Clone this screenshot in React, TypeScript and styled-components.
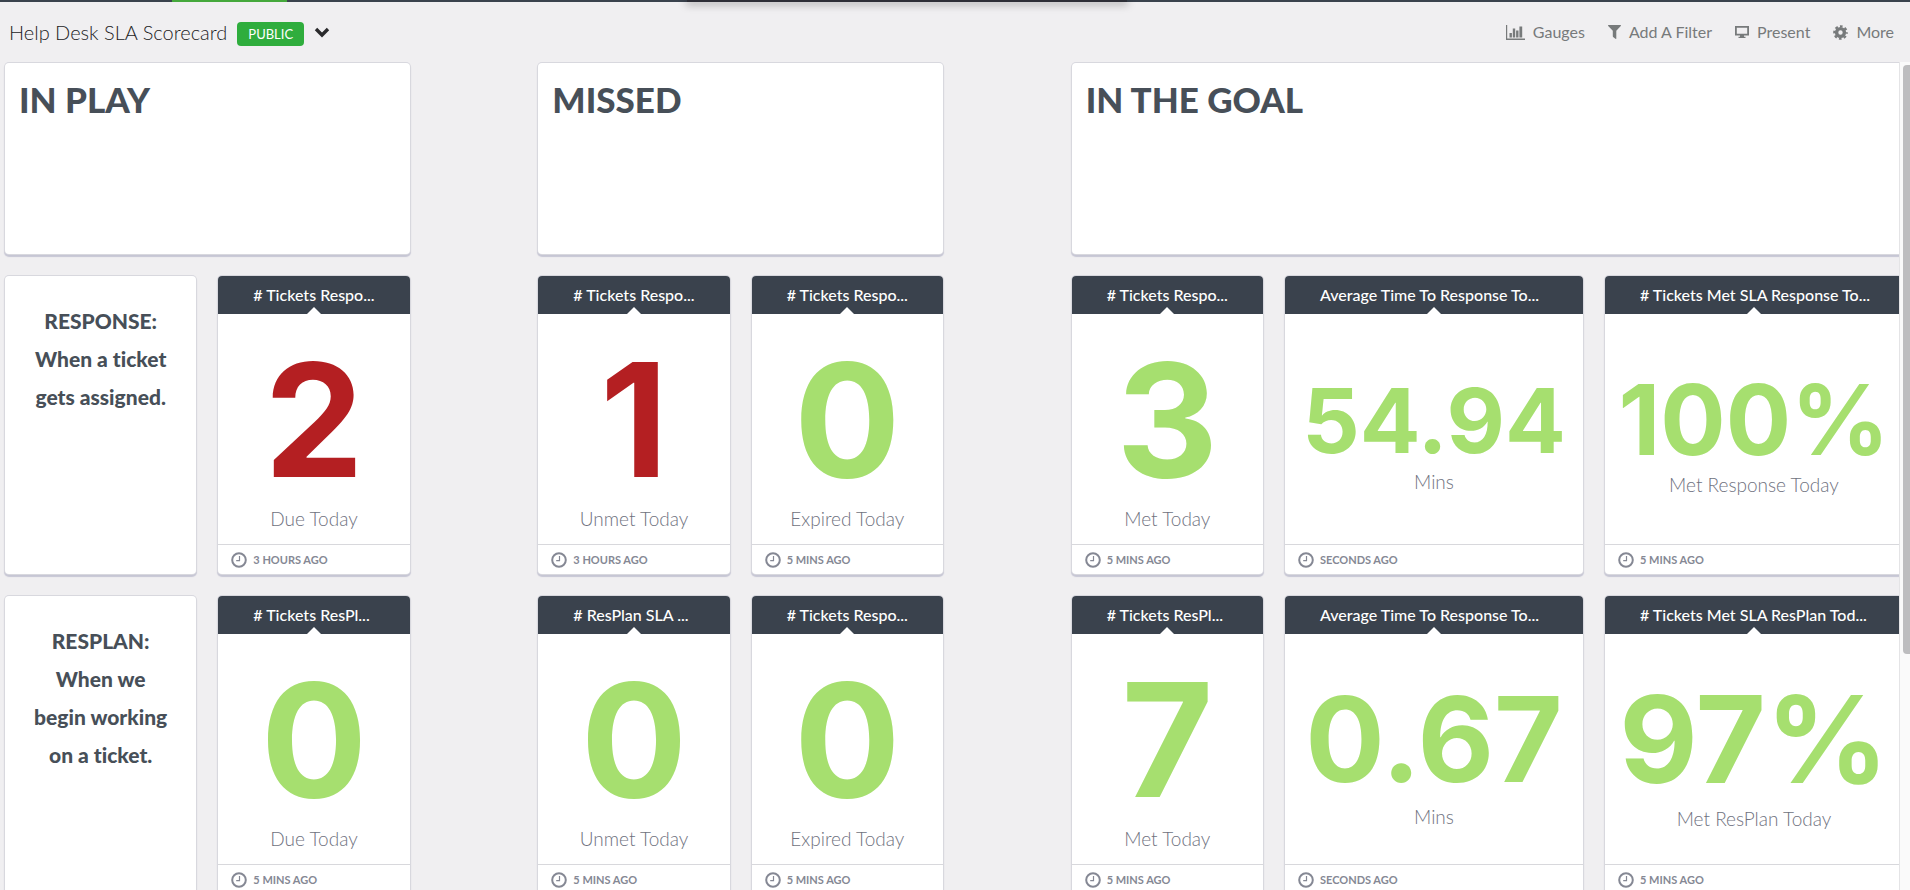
import React from "react";
import styled, { createGlobalStyle } from "styled-components";

const GlobalStyle = createGlobalStyle`
  *, *::before, *::after { box-sizing: border-box; }
  html, body, #root { height: 100%; }
  body {
    margin: 0;
    overflow: hidden;
    background: #f0eff1;
    color: #474f58;
    font-family: Lato, "Liberation Sans", sans-serif;
    font-variant-ligatures: none;
  }
`;

const Page = styled.div`
  display: flex;
  flex-direction: column;
  height: 100%;
`;

const NavEdge = styled.nav`
  display: flex;
  flex: none;
  height: 2px;
  padding-left: 9%;
  background: #3a424d;
`;

const NavTab = styled.span`
  width: 115px;
  background: #45a83c;
`;

const NavPanel = styled.span`
  width: 440px;
  margin-left: 400px;
  background: #2d2e36;
  box-shadow: 0 1px 9px 1px rgba(0, 0, 0, 0.4);
`;

const Toolbar = styled.header`
  display: flex;
  flex: none;
  align-items: center;
  justify-content: space-between;
  height: 60px;
  padding: 0 16px 0 9px;
`;

const TitleGroup = styled.div`
  display: flex;
  align-items: center;
  gap: 10px;
`;

const BoardTitle = styled.h1`
  margin: 0;
  color: #1c1c1e;
  font-size: 20px;
  font-weight: 300;
  line-height: 24px;
`;

const PublicBadge = styled.span`
  margin-top: 3px;
  padding: 0 11px;
  border-radius: 4px;
  background: #2fad3d;
  color: #fff;
  font-size: 13px;
  line-height: 24px;
`;

const PlainButton = styled.button`
  display: flex;
  align-items: center;
  gap: 8px;
  padding: 0;
  border: 0;
  background: none;
  color: #777a7b;
  font: inherit;
  font-size: 16px;
  line-height: 24px;
  cursor: pointer;
`;

const Actions = styled.div`
  display: flex;
  align-items: center;
  gap: 23px;
`;

const ScrollArea = styled.div`
  display: flex;
  flex: 1;
  min-height: 0;
`;

const Viewport = styled.main`
  flex: 1;
  min-width: 0;
  overflow: hidden;
`;

const Grid = styled.div`
  display: grid;
  grid-template-columns: repeat(18, minmax(0, 1fr));
  grid-auto-rows: 298px;
  grid-template-rows: 191px;
  gap: 22px;
  margin: 1px -4px 0 5px;
`;

const ScrollTrack = styled.div`
  flex: none;
  width: 11px;
  padding: 3px 0 0 3px;
  border-left: 1px solid #e4e4e6;
  background: #fafafa;
`;

const ScrollThumb = styled.div`
  height: 589px;
  border-radius: 4px 0 0 4px;
  background: #bdbdbf;
`;

const Card = styled.section<{ $start: number; $span: number }>`
  grid-column: ${(p) => p.$start} / span ${(p) => p.$span};
  display: flex;
  flex-direction: column;
  overflow: hidden;
  border-radius: 4px;
  background: #fff;
  box-shadow: 0 0 0 1px #d8d8de, 0 2px 1px 1px #c6c6d4;
`;

const GroupTitle = styled.h2`
  margin: 0;
  padding: 16px 14px;
  font-size: 35px;
  font-weight: 900;
  line-height: 40px;
`;

const Note = styled.p`
  margin: 0;
  padding: 26px 16px;
  font-size: 21px;
  font-weight: 900;
  line-height: 38px;
  text-align: center;
`;

const CardHeader = styled.h3`
  position: relative;
  flex: none;
  margin: 0;
  padding: 0 0 0 35px;
  background: #3a424d;
  color: #fff;
  font-size: 16px;
  font-weight: 500;
  line-height: 38px;
  white-space: nowrap;

  &::after {
    content: "";
    position: absolute;
    bottom: 0;
    left: 50%;
    margin-left: -7px;
    border: solid transparent;
    border-width: 0 7px 7px;
    border-bottom-color: #fff;
  }
`;

const Metric = styled.div`
  display: flex;
  flex: 1;
  flex-direction: column;
  align-items: center;
  justify-content: center;
  padding-top: 6px;
`;

const Value = styled.strong<{ $size: number; $alert?: boolean }>`
  color: ${(p) => (p.$alert ? "#b41f22" : "#a6df6f")};
  font-family: Inter, "Liberation Sans", sans-serif;
  font-size: ${(p) => p.$size}px;
  font-weight: 700;
  line-height: 1.1;
`;

const Label = styled.span`
  color: #6f7280;
  font-size: 19px;
  font-weight: 300;
  line-height: 24px;
`;

const CardFooter = styled.footer`
  display: flex;
  flex: none;
  align-items: center;
  gap: 6px;
  height: 30px;
  padding-left: 13px;
  border-top: 1px solid #d8d8dc;
  color: #858894;
  font-size: 11px;
  font-weight: 700;
  line-height: 16px;
`;

const ClockIcon = () => (
  <svg width="16" height="16" viewBox="0 0 16 16" fill="none" stroke="currentColor" aria-hidden="true">
    <circle cx="8" cy="8" r="6.8" strokeWidth="2" />
    <path d="M8.5 4v4.6H5.2" strokeWidth="1.2" />
  </svg>
);

const ChevronIcon = () => (
  <svg width="16" height="12" viewBox="0 0 16 12" fill="none" stroke="#2a2a2c" strokeWidth="3.4" aria-hidden="true">
    <path d="M2 3l6 6 6-6" />
  </svg>
);

const GaugesIcon = () => (
  <svg width="19" height="15" viewBox="0 0 19 15" fill="currentColor" aria-hidden="true">
    <path d="M0 0h1.2v13.6H19V15H0zM3.5 8h2.4v4.5H3.5zM6.8 3.5h2.4v9H6.8zM10.1 5.5h2.4v7h-2.4zM13.4 1.5h2.8v11h-2.8z" />
  </svg>
);

const FilterIcon = () => (
  <svg width="13" height="14" viewBox="0 0 13 14" fill="currentColor" aria-hidden="true">
    <path d="M.6 0h11.8c.6 0 .8.7.4 1.1L8.3 5.8V13.4c0 .5-.5.7-.9.4L5.1 11.9a.8.8 0 0 1-.3-.6V5.8L.2 1.1C-.2.7 0 0 .6 0z" />
  </svg>
);

const PresentIcon = () => (
  <svg width="14" height="12" viewBox="0 0 14 12" fill="currentColor" aria-hidden="true">
    <path fillRule="evenodd" d="M0 0h14v9.5H0zM1.8 1.8v6h10.4v-6zM5 9.5h4v1.2h1.5V12h-7v-1.3H5z" />
  </svg>
);

const GearIcon = () => (
  <svg width="15" height="15" viewBox="0 0 15 15" fill="none" stroke="currentColor" aria-hidden="true">
    <circle cx="7.5" cy="7.5" r="3.9" strokeWidth="3.4" />
    <circle cx="7.5" cy="7.5" r="6.3" strokeWidth="2" strokeDasharray="2.7 2.248" strokeDashoffset="1.35" />
  </svg>
);

const groups = [
  { title: "IN PLAY", start: 1, span: 4 },
  { title: "MISSED", start: 6, span: 4 },
  { title: "IN THE GOAL", start: 11, span: 8 },
];

interface Gauge {
  title: string;
  value: string;
  label: string;
  updated: string;
  start: number;
  span?: number;
  size?: number;
  alert?: boolean;
}

const rows: { note: string[]; gauges: Gauge[] }[] = [
  {
    note: ["RESPONSE:", "When a ticket", "gets assigned."],
    gauges: [
      { title: "# Tickets Respo...", value: "2", label: "Due Today", updated: "3 HOURS AGO", start: 3, alert: true },
      { title: "# Tickets Respo...", value: "1", label: "Unmet Today", updated: "3 HOURS AGO", start: 6, alert: true },
      { title: "# Tickets Respo...", value: "0", label: "Expired Today", updated: "5 MINS AGO", start: 8 },
      { title: "# Tickets Respo...", value: "3", label: "Met Today", updated: "5 MINS AGO", start: 11 },
      { title: "Average Time To Response To...", value: "54.94", label: "Mins", updated: "SECONDS AGO", start: 13, span: 3, size: 90 },
      { title: "# Tickets Met SLA Response To...", value: "100%", label: "Met Response Today", updated: "5 MINS AGO", start: 16, span: 3, size: 97 },
    ],
  },
  {
    note: ["RESPLAN:", "When we", "begin working", "on a ticket."],
    gauges: [
      { title: "# Tickets ResPl...", value: "0", label: "Due Today", updated: "5 MINS AGO", start: 3 },
      { title: "# ResPlan SLA ...", value: "0", label: "Unmet Today", updated: "5 MINS AGO", start: 6 },
      { title: "# Tickets Respo...", value: "0", label: "Expired Today", updated: "5 MINS AGO", start: 8 },
      { title: "# Tickets ResPl...", value: "7", label: "Met Today", updated: "5 MINS AGO", start: 11 },
      { title: "Average Time To Response To...", value: "0.67", label: "Mins", updated: "SECONDS AGO", start: 13, span: 3, size: 118 },
      { title: "# Tickets Met SLA ResPlan Tod...", value: "97%", label: "Met ResPlan Today", updated: "5 MINS AGO", start: 16, span: 3, size: 121 },
    ],
  },
];

export default function App() {
  return (
    <Page>
      <GlobalStyle />
      <NavEdge>
        <NavTab />
        <NavPanel />
      </NavEdge>
      <Toolbar>
        <TitleGroup>
          <BoardTitle>Help Desk SLA Scorecard</BoardTitle>
          <PublicBadge>PUBLIC</PublicBadge>
          <PlainButton aria-label="Switch dashboard">
            <ChevronIcon />
          </PlainButton>
        </TitleGroup>
        <Actions>
          <PlainButton><GaugesIcon />Gauges</PlainButton>
          <PlainButton><FilterIcon />Add A Filter</PlainButton>
          <PlainButton><PresentIcon />Present</PlainButton>
          <PlainButton><GearIcon />More</PlainButton>
        </Actions>
      </Toolbar>
      <ScrollArea>
        <Viewport>
          <Grid>
            {groups.map((g) => (
              <Card key={g.title} $start={g.start} $span={g.span}>
                <GroupTitle>{g.title}</GroupTitle>
              </Card>
            ))}
            {rows.map((row) => (
              <React.Fragment key={row.note[0]}>
                <Card $start={1} $span={2}>
                  <Note>
                    {row.note.map((line, i) => (
                      <React.Fragment key={line}>
                        {i > 0 && <br />}
                        {line}
                      </React.Fragment>
                    ))}
                  </Note>
                </Card>
                {row.gauges.map((g) => (
                  <Card key={g.start} $start={g.start} $span={g.span ?? 2}>
                    <CardHeader>{g.title}</CardHeader>
                    <Metric>
                      <Value $size={g.size ?? 158} $alert={g.alert}>{g.value}</Value>
                      <Label>{g.label}</Label>
                    </Metric>
                    <CardFooter>
                      <ClockIcon />
                      {g.updated}
                    </CardFooter>
                  </Card>
                ))}
              </React.Fragment>
            ))}
          </Grid>
        </Viewport>
        <ScrollTrack>
          <ScrollThumb />
        </ScrollTrack>
      </ScrollArea>
    </Page>
  );
}
